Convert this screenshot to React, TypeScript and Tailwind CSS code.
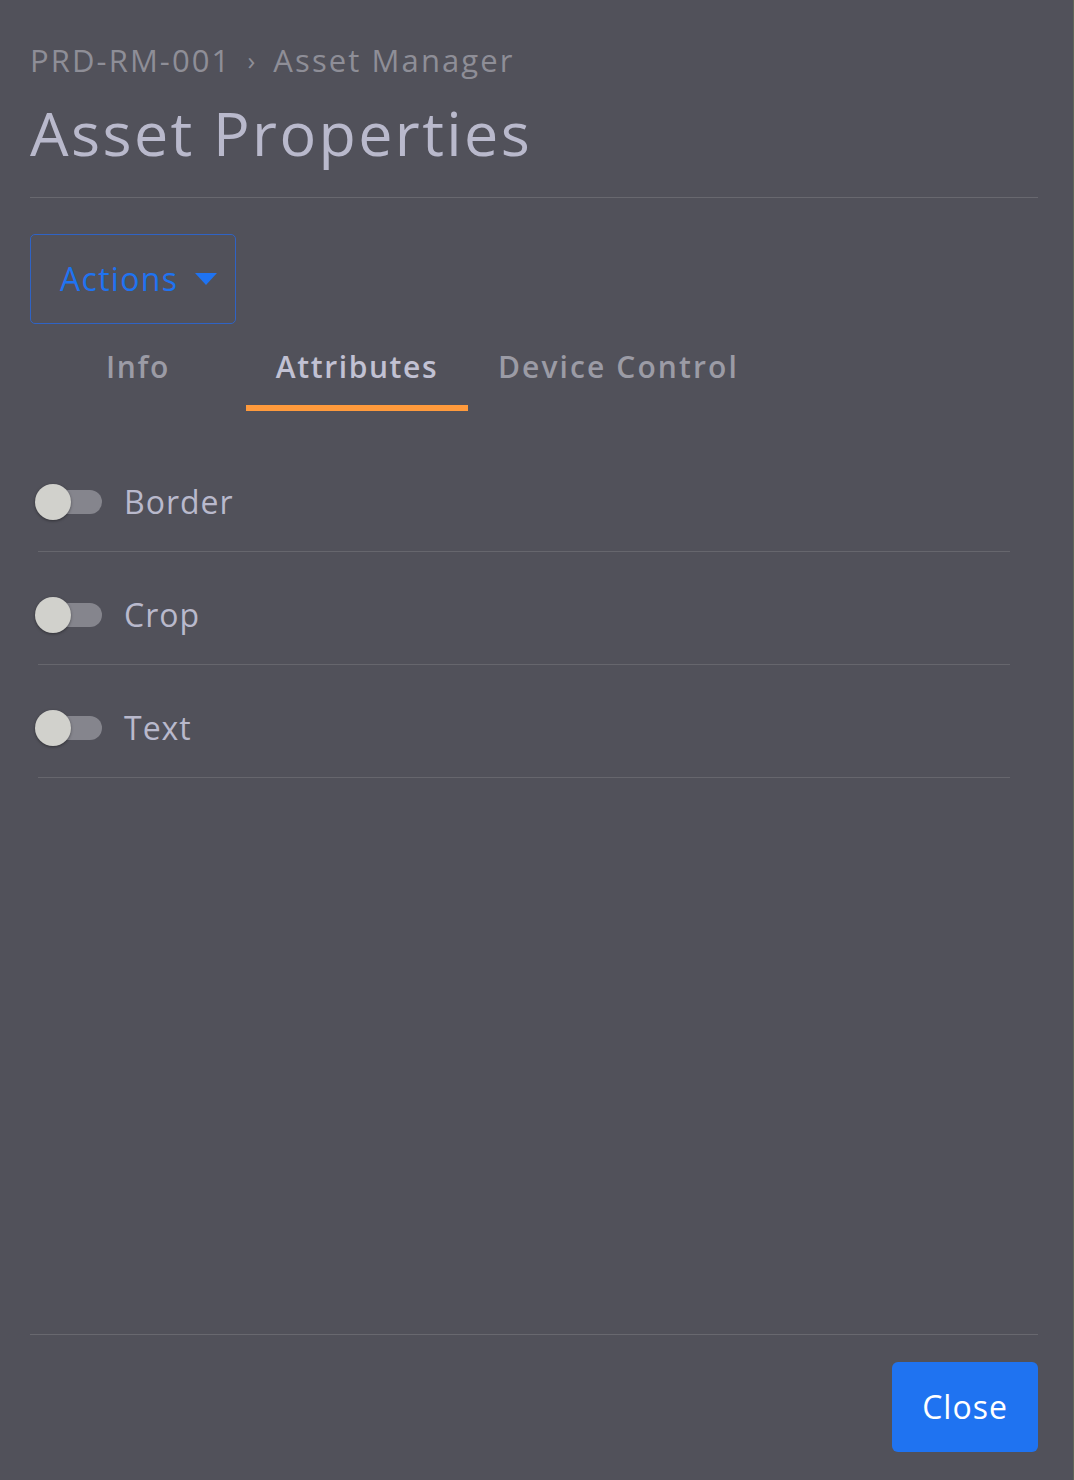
import React, { useState } from 'react';

const FONT = '"Open Sans", "Liberation Sans", sans-serif';

function Toggle({ on, onChange }: { on: boolean; onChange: () => void }) {
  return (
    <button
      onClick={onChange}
      className="relative w-[67px] h-[36px] flex items-center shrink-0"
    >
      <span className="absolute left-[2px] right-0 h-[24px] rounded-full bg-[#85858d]" />
      <span
        className={
          on
            ? 'absolute right-0 w-[36px] h-[36px] rounded-full bg-[#1f73f1] shadow-[0_1px_3px_rgba(0,0,0,0.4)]'
            : 'absolute left-0 w-[36px] h-[36px] rounded-full bg-[#d1d1cc] shadow-[0_1px_3px_rgba(0,0,0,0.4)]'
        }
      />
    </button>
  );
}

export default function App() {
  const [tab, setTab] = useState('Attributes');
  const [attrs, setAttrs] = useState<Record<string, boolean>>({
    Border: false,
    Crop: false,
    Text: false,
  });

  const tabs = ['Info', 'Attributes', 'Device Control'];

  return (
    <div
      className="w-[1074px] h-[1480px] bg-[#51515a] border-r border-[#5f6656] flex flex-col pl-[30px] pr-[35px] pt-[38px] pb-[28px]"
      style={{ fontFamily: FONT }}
    >
      {/* header */}
      <div className="flex items-center gap-[16px] text-[31px] leading-[44px] tracking-[2.1px] text-[#8e8e97]">
        <span>PRD-RM-001</span>
        <span className="text-[26px]">›</span>
        <span>Asset Manager</span>
      </div>
      <h1 className="text-[61px] leading-[80px] tracking-[2.4px] text-[#b9b9cc] mt-[11px] pb-[24px] border-b border-[#68686f]">
        Asset Properties
      </h1>

      {/* actions */}
      <div className="mt-[36px]">
        <button className="w-[206px] h-[90px] rounded-[5px] border border-[#2f63c4] flex items-center pl-[29px] gap-[17px] text-[32px] tracking-[1.3px] text-[#1f73f1]">
          <span>Actions</span>
          <svg width="22" height="12" viewBox="0 0 22 12">
            <path d="M0 0 L22 0 L11 12 Z" fill="#1f73f1" />
          </svg>
        </button>
      </div>

      {/* tabs */}
      <div className="flex mt-[10px]">
        {tabs.map((t) => (
          <button
            key={t}
            onClick={() => setTab(t)}
            className={
              t === 'Info'
                ? 'w-[216px] h-[77px] pb-[12px] flex items-center justify-center text-[30px] font-semibold tracking-[1.6px] text-[#9b9ba5]'
                : t === tab
                  ? 'relative w-[222px] h-[77px] pb-[12px] flex items-center justify-center text-[30px] font-semibold tracking-[1.6px] text-[#c1c1d3]'
                  : 'relative h-[77px] pb-[12px] px-[30px] flex items-center justify-center text-[30px] font-semibold tracking-[2.1px] text-[#9b9ba5]'
            }
          >
            {t}
            {t === tab && (
              <span className="absolute left-0 right-0 bottom-0 h-[6px] bg-[#ff9a3c]" />
            )}
          </button>
        ))}
      </div>

      {/* attribute list */}
      <div className="mt-[28px] pl-[5px] pr-[28px]">
        {Object.keys(attrs).map((k) => (
          <div key={k} className="flex flex-col">
            <div className="flex items-center h-[112px] pt-[14px] gap-[22px]">
              <Toggle
                on={attrs[k]}
                onChange={() => setAttrs({ ...attrs, [k]: !attrs[k] })}
              />
              <span className="text-[32px] tracking-[1px] text-[#b9b9cc]">{k}</span>
            </div>
            <div className="ml-[3px] h-px bg-[#66666d]" />
          </div>
        ))}
      </div>

      {/* footer */}
      <div className="mt-auto border-t border-[#68686f] pt-[27px] flex justify-end">
        <button className="w-[146px] h-[90px] rounded-[6px] bg-[#1f73f1] text-white text-[32px] tracking-[1px]">
          Close
        </button>
      </div>
    </div>
  );
}
